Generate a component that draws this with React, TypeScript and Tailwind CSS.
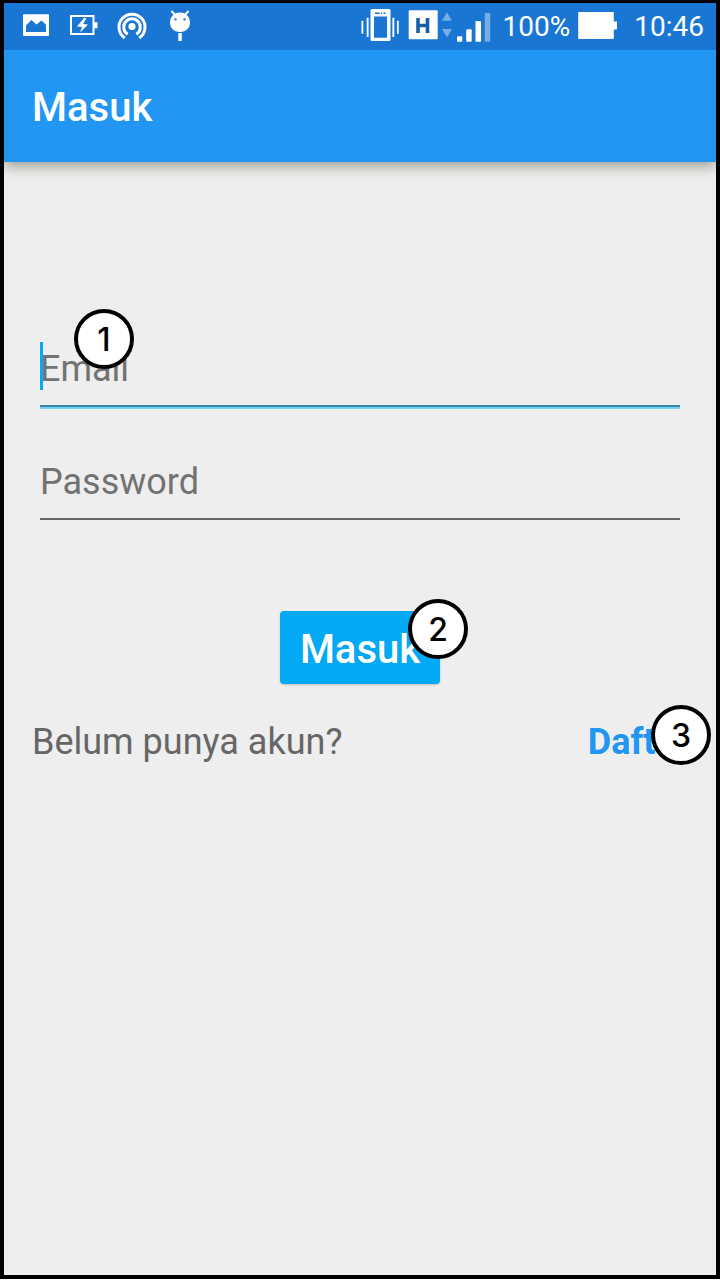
import type { ReactNode } from "react";

function Glyph({ box, width, children }: { box: string; width: string; children: ReactNode }) {
  return (
    <svg viewBox={box} className={`h-[47px] shrink-0 ${width}`} fill="#fff" aria-hidden="true">
      {children}
    </svg>
  );
}

function Badge({ n, place }: { n: number; place: string }) {
  return (
    <span
      className={`absolute z-10 flex size-[60px] items-center justify-center rounded-full border-4 border-black bg-white pt-0.5 font-[Inter,sans-serif] text-[32px] leading-8 font-medium text-black ${place}`}
    >
      {n}
    </span>
  );
}

function StatusBar() {
  return (
    <div className="flex h-[47px] items-center justify-between bg-[#1976d2] pr-3 pl-[18px] text-[28px] leading-8 text-white">
      <div className="flex items-center gap-[18px]">
        <Glyph box="22 3 28 47" width="w-7">
          <path
            fillRule="evenodd"
            d="M24 14.3h24.2q.8 0 .8.8v20q0 .9-.8.9H24q-1 0-1-.9v-20q0-.8 1-.8ZM26 32h20v-7.3l-4.5-4.2-5 4-5.2-4.500-5.300 5.600Z"
          />
        </Glyph>
        <Glyph box="68 3 30 47" width="w-[30px]">
          <path fillRule="evenodd" d="M70 15h24.500v7.300H97.500v6H94.500V35H70ZM72 17v16h20.500V17Z" />
          <path d="m84 18-7 8.500 5 .5-2 5.500 8-8-4.800-.6 3.200-5.900Z" />
        </Glyph>
        <Glyph box="116 3 32 47" width="w-8">
          <circle cx="132" cy="26.500" r="3.600" />
          <g fill="none" stroke="#fff" strokeWidth="3">
            <path d="M127.700 34.200A8.300 8.300 0 1 1 136.300 34.200" />
            <path d="M124.800 38A13 13 0 1 1 139.200 38" />
          </g>
        </Glyph>
        <Glyph box="166 3 28 47" width="w-7">
          <path d="M171.500 11 176 16M188.500 11 184 16" stroke="#fff" strokeWidth="2" />
          <path
            fillRule="evenodd"
            d="M180 12.500C186 12.500 190 17 190 22.500S186 32 180 32 170 28 170 22.500 174 12.500 180 12.500ZM175.500 18.200a1.200 1.200 0 1 0 .1 0ZM184.500 18.200a1.200 1.200 0 1 0 .1 0Z"
          />
          <path d="M178.300 33h3.500v8h-3.500Z" />
        </Glyph>
      </div>
      <div className="flex items-center">
        <div className="flex items-center pr-3">
          <Glyph box="359 3 40 47" width="w-10">
            <path
              fillRule="evenodd"
              d="M371 9h17q1.500 0 1.500 1.500V39.500q0 1.500-1.500 1.500H371q-1.500 0-1.500-1.500v-29Q369.500 9 371 9ZM373 16.500v21.300h13V16.500ZM374 12.500v1.500h4.500v-1.500ZM380 12.500v1.500h1.200v-1.500ZM382.500 12.500v1.500h2v-1.500Z"
            />
            <path d="M360.500 20.700h1.800v13h-1.800ZM365.700 17.700h1.900v19.300h-1.900ZM391.400 17.700h1.900v19.300h-1.900ZM396 20.700h1.700v13H396Z" />
          </Glyph>
          <Glyph box="400 3 54 47" width="w-[54px]">
            <rect x="408.700" y="10.300" width="29" height="29" rx="1" />
            <path d="M418 18v15M427.500 18v15M418 25.500h9.500" stroke="#155fa9" strokeWidth="3.600" />
            <path d="m447 12.300 5 8.500h-10ZM442 29h10l-5 8.500Z" fill="#75ade4" />
          </Glyph>
          <Glyph box="455 3 37 47" width="w-[37px]">
            <rect x="458" y="36.300" width="5.300" height="5.400" rx="1" />
            <rect x="467.200" y="29.300" width="5.500" height="12.400" rx="1" />
            <rect x="476.500" y="21" width="5.500" height="20.700" rx="1" />
            <rect x="485.800" y="13" width="5.400" height="28.700" rx="1" fill="#75ade4" />
          </Glyph>
        </div>
        <span>100%</span>
        <Glyph box="570 3 55 47" width="w-[55px]">
          <path d="M579 12h34q.8 0 .8.800V21.500H617v8h-3.200v8.700q0 .8-.8.8h-34q-.8 0-.8-.8V12.800q0-.8.800-.8Z" />
        </Glyph>
        <time className="pl-[9px]">10:46</time>
      </div>
    </div>
  );
}

export default function App() {
  return (
    <div className="flex min-h-screen flex-col bg-white pb-px font-[Roboto,sans-serif]">
      <div className="flex flex-1 flex-col border-4 border-t-[3px] border-black bg-[#eeeeee]">
        <StatusBar />
        <header className="flex h-28 items-center bg-[#2196f3] px-7 pt-1 shadow-[0_5px_12px_rgba(50,50,30,0.4)] [clip-path:inset(0_0_-30px_0)]">
          <h1 className="text-[40px] leading-[48px] font-medium text-white">Masuk</h1>
        </header>
        <main className="px-7 pt-[180px]">
          <form onSubmit={(e) => e.preventDefault()}>
            <div className="flex flex-col gap-[42px] px-2">
              <div className="relative">
                <input
                  type="email"
                  aria-label="Email"
                  placeholder="Email"
                  className="block h-[65px] w-full border-b-2 border-[#3487a5] bg-transparent pb-2.5 text-4xl text-[#444] shadow-[0_2px_0_#76d2f3] outline-none placeholder:text-[#727272]"
                />
                <span className="absolute top-0 left-0 h-12 w-[3px] bg-[#03a9f4]" />
                <Badge n={1} place="-top-[33px] left-[34px]" />
              </div>
              <input
                type="password"
                aria-label="Password"
                placeholder="Password"
                className="block h-[71px] w-full border-b-2 border-[#666] bg-transparent pt-1 pb-2 text-4xl text-[#444] outline-none placeholder:text-[#727272]"
              />
            </div>
            <div className="mt-[91px] flex justify-center">
              <button
                type="submit"
                className="relative h-[73px] w-40 rounded-[4px] bg-[#03a9f4] pt-1 text-[40px] leading-[48px] font-medium text-white shadow-[0_1px_2px_rgba(0,0,0,0.2)]"
              >
                Masuk
                <Badge n={2} place="-top-3 left-32" />
              </button>
            </div>
          </form>
          <p className="mt-9 flex items-center justify-between text-4xl leading-[44px] text-[#666]">
            <span>Belum punya akun?</span>
            <a href="#daftar" className="relative font-bold text-[#2196f3]">
              Daftar
              <Badge n={3} place="-top-[15px] -right-[23px]" />
            </a>
          </p>
        </main>
      </div>
    </div>
  );
}
